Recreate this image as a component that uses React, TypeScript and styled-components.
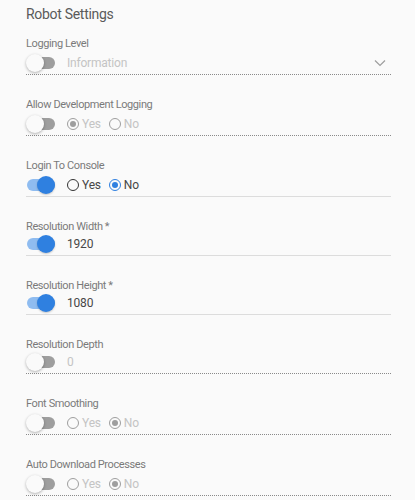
import React from "react";
import styled, { createGlobalStyle, css } from "styled-components";

const Global = createGlobalStyle`
  html, body { margin: 0; padding: 0; background: #fafafa; }
  body { font-family: Roboto, "Noto Sans", Arial, sans-serif; }
`;

const Page = styled.div`
  padding: 4px 24px 0 26px;
  width: 365px;
`;

const Title = styled.div`
  font-size: 14px;
  line-height: 20px;
  letter-spacing: -0.3px;
  color: #5a5a5a;
  margin-bottom: 13px;
`;

const Field = styled.div`
  display: flex;
  flex-direction: column;
  & + & { margin-top: 23px; }
`;

const Label = styled.div`
  font-size: 11px;
  line-height: 14px;
  letter-spacing: -0.4px;
  color: #7a7a7a;
`;

const Row = styled.div<{ $kind: "radio" | "text"; $dotted: boolean }>`
  display: flex;
  align-items: center;
  gap: 12px;
  height: ${(p) => (p.$kind === "radio" ? 23 : 19)}px;
  padding-bottom: ${(p) => (p.$kind === "radio" ? 0 : 2)}px;
  border-bottom: 1px ${(p) => (p.$dotted ? "dotted #8a8a8a" : "solid #dcdcdc")};
`;

const SwitchWrap = styled.div`
  position: relative;
  width: 29px;
  height: 18px;
  flex: none;
`;

const Track = styled.div<{ $on: boolean }>`
  position: absolute;
  left: 1px;
  right: 0;
  top: 3px;
  height: 12px;
  border-radius: 6px;
  background: ${(p) => (p.$on ? "#8fbcf0" : "#9e9e9e")};
`;

const Thumb = styled.div<{ $on: boolean }>`
  position: absolute;
  top: 0;
  width: 18px;
  height: 18px;
  border-radius: 50%;
  ${(p) =>
    p.$on
      ? css`
          left: 11px;
          background: #2f80e0;
          box-shadow: 0 1px 2px rgba(0, 0, 0, 0.2);
        `
      : css`
          left: 0;
          background: #fafafa;
          box-shadow: 0 1px 3px rgba(0, 0, 0, 0.3);
        `}
`;

const Value = styled.div<{ $disabled: boolean }>`
  font-size: 12px;
  letter-spacing: -0.2px;
  color: ${(p) => (p.$disabled ? "#c4c4c4" : "#474747")};
  flex: 1;
`;

const Chevron = styled.svg`
  width: 12px;
  height: 8px;
  margin-right: 5px;
  flex: none;
`;

const RadioGroup = styled.div`
  display: flex;
  align-items: center;
  gap: 8px;
`;

const RadioItem = styled.div<{ $disabled: boolean }>`
  display: flex;
  align-items: center;
  gap: 3px;
  font-size: 12px;
  letter-spacing: -0.2px;
  color: ${(p) => (p.$disabled ? "#c4c4c4" : "#474747")};
`;

const Circle = styled.span<{ $checked: boolean; $disabled: boolean }>`
  width: 10px;
  height: 10px;
  border-radius: 50%;
  box-sizing: content-box;
  border: 1.5px solid
    ${(p) => (p.$disabled ? "#9e9e9e" : p.$checked ? "#2f80e0" : "#333")};
  display: flex;
  align-items: center;
  justify-content: center;
  &::after {
    content: "";
    width: 6px;
    height: 6px;
    border-radius: 50%;
    background: ${(p) =>
      p.$checked ? (p.$disabled ? "#9e9e9e" : "#2f80e0") : "transparent"};
  }
`;

function Switch({ on }: { on: boolean }) {
  return (
    <SwitchWrap>
      <Track $on={on} />
      <Thumb $on={on} />
    </SwitchWrap>
  );
}

function Radios({ value, disabled }: { value: "yes" | "no"; disabled: boolean }) {
  return (
    <RadioGroup>
      <RadioItem $disabled={disabled}>
        <Circle $checked={value === "yes"} $disabled={disabled} />
        Yes
      </RadioItem>
      <RadioItem $disabled={disabled}>
        <Circle $checked={value === "no"} $disabled={disabled} />
        No
      </RadioItem>
    </RadioGroup>
  );
}

type Item =
  | { label: string; kind: "select"; on: boolean; value: string }
  | { label: string; kind: "radio"; on: boolean; value: "yes" | "no" }
  | { label: string; kind: "text"; on: boolean; value: string };

const items: Item[] = [
  { label: "Logging Level", kind: "select", on: false, value: "Information" },
  { label: "Allow Development Logging", kind: "radio", on: false, value: "yes" },
  { label: "Login To Console", kind: "radio", on: true, value: "no" },
  { label: "Resolution Width *", kind: "text", on: true, value: "1920" },
  { label: "Resolution Height *", kind: "text", on: true, value: "1080" },
  { label: "Resolution Depth", kind: "text", on: false, value: "0" },
  { label: "Font Smoothing", kind: "radio", on: false, value: "no" },
  { label: "Auto Download Processes", kind: "radio", on: false, value: "no" },
];

export default function App() {
  return (
    <>
      <Global />
      <Page>
        <Title>Robot Settings</Title>
        {items.map((it) => (
          <Field key={it.label}>
            <Label>{it.label}</Label>
            <Row $kind={it.kind === "text" ? "text" : "radio"} $dotted={!it.on}>
              <Switch on={it.on} />
              {it.kind === "radio" ? (
                <Radios value={it.value} disabled={!it.on} />
              ) : (
                <Value $disabled={!it.on}>{it.value}</Value>
              )}
              {it.kind === "select" && (
                <Chevron viewBox="0 0 12 8">
                  <path d="M1 1.5 L6 6.5 L11 1.5" fill="none" stroke="#9e9e9e" strokeWidth="1.2" />
                </Chevron>
              )}
            </Row>
          </Field>
        ))}
      </Page>
    </>
  );
}
